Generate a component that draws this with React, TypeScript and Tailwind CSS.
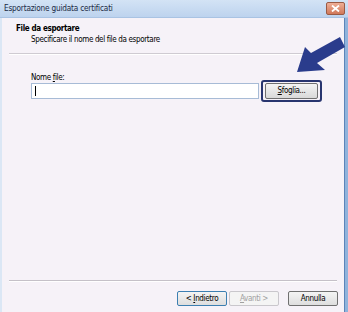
import React from "react";

export default function App() {
  const font = { fontFamily: '"DejaVu Sans Condensed", "Liberation Sans", Arial, sans-serif' };
  return (
    <div className="relative w-[348px] h-[312px] overflow-hidden bg-[#f6f2f8] flex flex-col text-[8px] tracking-[-0.35px] text-black" style={font}>
      {/* Title bar */}
      <div className="h-[18px] shrink-0 flex items-center justify-between pl-[4px] pr-[3px] bg-gradient-to-b from-[#d3e3f5] to-[#bdd3ee] border-b border-[#a9c3e3]">
        <span className="text-[8.2px] tracking-[-0.2px] text-[#1b2a44]">Esportazione guidata certificati</span>
        <div className="w-[19px] h-[13px] rounded-[2px] border border-[#9a5a44] bg-gradient-to-b from-[#eeae96] to-[#d0785a] flex items-center justify-center">
          <svg width="9" height="7" viewBox="0 0 9 7">
            <path d="M1 0.5 L8 6.5 M8 0.5 L1 6.5" stroke="#ffffff" strokeWidth="1.8" />
          </svg>
        </div>
      </div>
      {/* Body */}
      <div className="flex-1 flex">
        <div className="w-[2px] bg-[#dbe7f5]" />
        <div className="flex-1 flex flex-col">
          {/* header */}
          <div className="h-[35px] flex flex-col pt-[5px] pl-[14px]">
            <span className="font-bold leading-[11px]">File da esportare</span>
            <span className="pl-[15px] leading-[12px]">Specificare il nome del file da esportare</span>
          </div>
          <div className="mx-[7px] h-[2px] border-t border-[#cfcbd2] border-b border-b-white" />
          {/* content */}
          <div className="flex-1 flex flex-col pl-[29px] pt-[18px]">
            <span className="leading-[10px]">Nome <u>f</u>ile:</span>
            <div className="flex items-center mt-[-3px]">
              <div className="w-[228px] h-[16px] bg-white border border-[#a7bbd6] flex items-center pl-[3px]">
                <div className="w-[1px] h-[10px] bg-black" />
              </div>
              <div className="ml-[2px] w-[61px] h-[22px] rounded-[3px] border-2 border-[#28356f] flex items-center justify-center">
                <div className="w-[53px] h-[16px] rounded-[2px] border border-[#707070] bg-gradient-to-b from-[#f4f4f4] to-[#d9d9d9] flex items-center justify-center">
                  <span><u>S</u>foglia...</span>
                </div>
              </div>
            </div>
          </div>
          <div className="mx-[7px] h-[2px] border-t border-[#c5c1c8] border-b border-b-white" />
          <div className="h-[30px] flex items-start justify-end pt-[9px] pr-[6px]">
            <div className="w-[50px] h-[15px] rounded-[2px] border border-[#3c7fb1] bg-gradient-to-b from-[#f4f4f4] to-[#dedede] flex items-center justify-center">
              <span>{"< "}<u>I</u>ndietro</span>
            </div>
            <div className="ml-[2px] w-[50px] h-[15px] rounded-[2px] border border-[#c9c7cc] bg-[#f4f4f4] text-[#a0a0a0] flex items-center justify-center">
              <span><u>A</u>{"vanti >"}</span>
            </div>
            <div className="ml-[9px] w-[50px] h-[15px] rounded-[2px] border border-[#707070] bg-gradient-to-b from-[#f4f4f4] to-[#dedede] flex items-center justify-center">
              Annulla
            </div>
          </div>
        </div>
        <div className="w-[4px] bg-[#8fb3dc] border-l border-[#5c84b8]" />
      </div>
      {/* Arrow overlay */}
      <svg className="absolute left-0 top-0" width="348" height="312" viewBox="0 0 348 312">
        <polygon points="297,72 305,47 311,53 340,37 345,47 317,63 325,70" fill="#2a3c8c" />
      </svg>
    </div>
  );
}
